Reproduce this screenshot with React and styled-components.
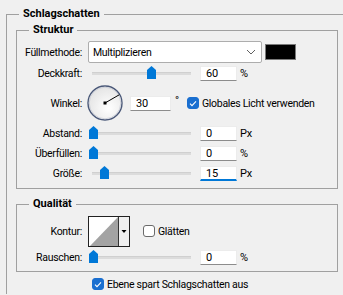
import React from "react";
import styled, { createGlobalStyle } from "styled-components";

const GlobalStyle = createGlobalStyle`
  html, body {
    margin: 0;
    padding: 0;
    background: #f0f0f0;
    overflow: hidden;
  }
  body {
    font-family: Roboto, "Liberation Sans", Arial, sans-serif;
    font-size: 10.5px;
    letter-spacing: -0.3px;
    color: #000;
  }
`;

const Group = styled.fieldset`
  margin: ${(p) => p.$mt || 0}px 0 0 ${(p) => p.$ml || 0}px;
  padding: ${(p) => p.$pad || "0"};
  min-width: 0;
  width: ${(p) => p.$w}px;
  box-sizing: border-box;
  border: 1px solid #a0a0a0;
  ${(p) => p.$open && "border-right: none; border-bottom: none;"}
`;

const Title = styled.legend`
  margin-left: 12px;
  padding: 0 4px;
  font-weight: bold;
  font-size: 11px;
  letter-spacing: 0;
  line-height: 14px;
`;

const Row = styled.div`
  display: flex;
  align-items: center;
  height: ${(p) => p.$h || 20}px;
  margin-top: ${(p) => p.$mt || 0}px;
  margin-left: ${(p) => p.$ml || 0}px;
`;

const Label = styled.span`
  flex-shrink: 0;
  width: 65px;
  margin-right: 6px;
  text-align: right;
  white-space: nowrap;
`;

const Select = styled.div`
  display: flex;
  align-items: center;
  justify-content: space-between;
  box-sizing: border-box;
  width: 174px;
  height: 22px;
  padding: 0 5px 0 4px;
  background: #fff;
  border: 1px solid #adadad;
  border-radius: 2px;
`;

const Swatch = styled.div`
  box-sizing: border-box;
  width: 31px;
  height: 16px;
  margin-left: 3px;
  background: #000;
  border: 1px solid #7a7a7a;
`;

const Slider = styled.div`
  position: relative;
  display: flex;
  align-items: center;
  width: 108px;
  height: 20px;
  flex-shrink: 0;
`;

const Track = styled.div`
  flex: 1;
  height: 3px;
  margin: 1px 5px 0 4px;
  background: #dcdcdc;
  border-top: 1px solid #d0d0d0;
  box-sizing: border-box;
`;

const Thumb = styled.div`
  position: absolute;
  top: 3px;
  width: 9px;
  height: 13px;
  background: #0078d7;
  clip-path: polygon(50% 0, 100% 30%, 100% 100%, 0 100%, 0 30%);
`;

const Field = styled.div`
  box-sizing: border-box;
  width: ${(p) => p.$w || 37}px;
  height: 15px;
  margin-left: ${(p) => p.$ml ?? 4}px;
  padding-left: 5px;
  background: #fff;
  border: 1px solid #ececec;
  border-bottom: ${(p) => (p.$focus ? "2px solid #0078d7" : "1px solid #8c8c8c")};
  line-height: 13px;
  font-size: 11px;
`;

const Unit = styled.span`
  margin-left: 3px;
  font-size: 11px;
`;

const Degree = styled.span`
  width: 12px;
  margin-left: 4px;
  align-self: flex-start;
  margin-top: 11px;
  font-size: 11px;
`;

const Box = styled.span`
  display: flex;
  align-items: center;
  justify-content: center;
  box-sizing: border-box;
  width: 12px;
  height: 12px;
  margin-right: 3px;
  border-radius: 3px;
  background: ${(p) => (p.$checked ? "#1a6fd0" : "#fff")};
  border: 1px solid ${(p) => (p.$checked ? "#1a6fd0" : "#6a6a6a")};
`;

const CheckWrap = styled.label`
  display: flex;
  align-items: center;
  margin-left: ${(p) => p.$ml || 0}px;
  white-space: nowrap;
`;

const Chevron = () => (
  <svg width="10" height="6" viewBox="0 0 10 6">
    <path d="M1 1 L5 5 L9 1" fill="none" stroke="#606060" strokeWidth="1" />
  </svg>
);

const Check = ({ checked, children, ml }) => (
  <CheckWrap $ml={ml}>
    <Box $checked={checked}>
      {checked && (
        <svg width="8" height="7" viewBox="0 0 8 7">
          <path d="M1 3.6 L3 5.6 L7 1.4" fill="none" stroke="#fff" strokeWidth="1.1" />
        </svg>
      )}
    </Box>
    {children}
  </CheckWrap>
);

const Dial = styled.svg`
  margin-left: -1px;
  flex-shrink: 0;
`;

const AngleDial = ({ angle }) => {
  const r = (angle * Math.PI) / 180;
  const x = 18 + 16.5 * Math.cos(r);
  const y = 18 - 16.5 * Math.sin(r);
  return (
    <Dial width="36" height="36" viewBox="0 0 36 36">
      <defs>
        <radialGradient id="dialFill" cx="60%" cy="65%" r="65%">
          <stop offset="0%" stopColor="#ffffff" />
          <stop offset="100%" stopColor="#e4e4e4" />
        </radialGradient>
      </defs>
      <circle cx="18" cy="18" r="17" fill="url(#dialFill)" stroke="#4a5878" strokeWidth="1.4" />
      <circle cx="18" cy="18" r="15.8" fill="none" stroke="#c8ccd6" strokeWidth="0.8" />
      <line x1="18" y1="18" x2={x} y2={y} stroke="#000" strokeWidth="1" />
      <rect x="16.5" y="16.5" width="3" height="3" fill="#000" />
    </Dial>
  );
};

const Contour = () => (
  <svg width="42" height="31" viewBox="0 0 42 31" style={{ flexShrink: 0 }}>
    <rect x="0.5" y="0.5" width="41" height="30" fill="#fff" stroke="#222" />
    <rect x="31" y="1" width="10" height="29" fill="#f0f0f0" />
    <line x1="30.5" y1="1" x2="30.5" y2="30" stroke="#333" />
    <polygon points="2,30 30,1 30,30" fill="#a3a3a3" />
    <polygon points="33.5,14 38.5,14 36,17" fill="#000" />
  </svg>
);

const SliderRow = ({ label, value, frac, unit, focus }) => (
  <Row>
    <Label>{label}</Label>
    <Slider>
      <Track />
      <Thumb style={{ left: `${Math.round(0.5 + frac * 98)}px` }} />
    </Slider>
    <Field $focus={focus}>{value}</Field>
    <Unit>{unit}</Unit>
  </Row>
);

export default function App() {
  return (
    <>
      <GlobalStyle />
      <Group $mt={7} $ml={6} $w={337} $open>
        <Title>Schlagschatten</Title>
        <Group $mt={2} $ml={9} $w={322} $pad="4px 0 5px 0">
          <Title>Struktur</Title>
          <Row $h={22}>
            <Label>Füllmethode:</Label>
            <Select>
              <span>Multiplizieren</span>
              <Chevron />
            </Select>
            <Swatch />
          </Row>
          <SliderRow label="Deckkraft:" value="60" frac={0.6} unit="%" />
          <Row $h={40}>
            <Label>Winkel:</Label>
            <AngleDial angle={30} />
            <Field $w={41} $ml={7}>30</Field>
            <Degree>°</Degree>
            <Check checked>Globales Licht verwenden</Check>
          </Row>
          <SliderRow label="Abstand:" value="0" frac={0} unit="Px" />
          <SliderRow label="Überfüllen:" value="0" frac={0} unit="%" />
          <SliderRow label="Größe:" value="15" frac={0.117} unit="Px" focus />
        </Group>
        <Group $mt={8} $ml={9} $w={322} $pad="4px 0 4px 0">
          <Title>Qualität</Title>
          <Row $h={32}>
            <Label>Kontur:</Label>
            <Contour />
            <Check ml={13}>Glätten</Check>
          </Row>
          <SliderRow label="Rauschen:" value="0" frac={0} unit="%" />
        </Group>
        <Row $mt={2} $ml={85}>
          <Check checked>Ebene spart Schlagschatten aus</Check>
        </Row>
      </Group>
    </>
  );
}
